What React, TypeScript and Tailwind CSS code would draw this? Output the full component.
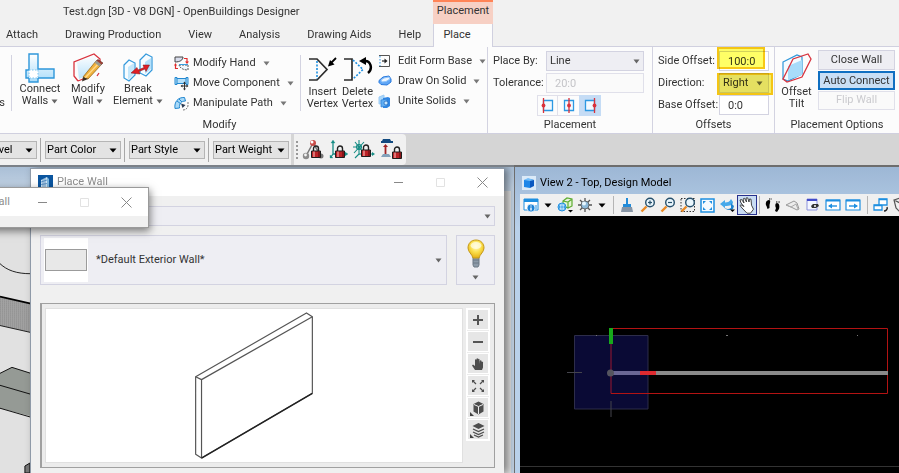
import type { ReactNode } from 'react'

function Caret({ className = 'text-[#666]' }: { className?: string }) {
  return (
    <svg width="7" height="5" viewBox="0 0 7 5" className={`shrink-0 ${className}`}>
      <path d="M0.5 0.5h6L3.5 4.5z" fill="currentColor" />
    </svg>
  )
}

function BlackCaret() {
  return (
    <svg width="8" height="5" viewBox="0 0 8 5" className="shrink-0">
      <path d="M0.5 0.5h7L4 4.5z" fill="#000" />
    </svg>
  )
}

/* ---------- ribbon icons ---------- */

function ConnectWallsIcon() {
  return (
    <svg width="30" height="30" viewBox="0 0 30 30">
      <defs>
        <linearGradient id="wallBlue" x1="0" y1="0" x2="0" y2="1">
          <stop offset="0" stopColor="#ffffff" />
          <stop offset="1" stopColor="#a9dcfa" />
        </linearGradient>
      </defs>
      <path d="M4 1h9v15h16v9H13v4H4v-4H1v-8h3z" fill="url(#wallBlue)" stroke="#2e97da" strokeWidth="1.4" />
      <path d="M4 17h9v8H4z" fill="#fff" stroke="#7cc3ee" strokeDasharray="1.5 1.5" />
    </svg>
  )
}

function ModifyWallIcon() {
  return (
    <svg width="30" height="30" viewBox="0 0 30 30">
      <path d="M4 9l19-7v16L6 26z" fill="url(#wallBlue)" opacity=".8" />
      <path d="M5 28L1 23V9l20-8 6 5v5M5 28l5-2M26 20l-2 3" fill="none" stroke="#d8343f" strokeWidth="1.3" />
      <path d="M10 24L23 8l5 4L15 26z" fill="#f0b23c" stroke="#98671b" strokeWidth=".8" />
      <path d="M12 25L26 10" stroke="#ffd98a" strokeWidth="1.4" />
      <path d="M23 8l2-1.5 5 3.5-2 2z" fill="#a43e32" stroke="#5b2c20" strokeWidth=".6" />
      <path d="M21.500 9.500l2-2 5 4-2 2z" fill="#9a9a90" />
      <path d="M10 24l5 2-6 2.500z" fill="#3b2d20" />
    </svg>
  )
}

function BreakElementIcon() {
  return (
    <svg width="30" height="30" viewBox="0 0 30 30">
      <g fill="#f7fcff" stroke="#3399dc" strokeWidth="1.2">
        <path d="M1 12l5-5 6 3v12l-6 6-5-3z" />
        <path d="M5 14v13l6-6V10z" stroke="none" fill="#c4e7fb" />
        <path d="M17 7l6-6 6 3v13l-6 6-6-3z" />
        <path d="M22 9v12l6-5V5z" stroke="none" fill="#b4e0fa" />
      </g>
      <path d="M8 20l6-5.500 1 2.500 6-2.500-1-2.500h6.500L23 18.500 22 16l-6 2.500 1 2.500z" fill="#df1f26" stroke="#7c1016" strokeWidth=".5" />
    </svg>
  )
}

function ModifyHandIcon() {
  return (
    <svg width="15" height="15" viewBox="0 0 15 15" fill="none">
      <path d="M1 1h8c0 3-3 5-8 5z" fill="#d8ddec" stroke="#444" />
      <path d="M10 2.500h3V6M4 12.500H1.500V9" stroke="#e02b2b" strokeWidth="1.200" />
      <path d="M11 5.500l2 2.500 2-2.500zM0 9.500L1.500 7 3 9.500z" fill="#e02b2b" />
      <path d="M5 9h9v5c-5 0-8-2-9-5z" fill="#f0f8ff" stroke="#555" strokeDasharray="2 1" />
      <path d="M5 8.500h9" stroke="#3a9fe2" />
    </svg>
  )
}

function MoveComponentIcon() {
  return (
    <svg width="15" height="15" viewBox="0 0 15 15" fill="none">
      <path d="M1 1.500h2v1h9v-1h2v7h-2v-1H3v1H1z" fill="#b5e0fa" stroke="#2388d0" />
      <path d="M3 2v6M12 2v6" stroke="#2388d0" />
      <path d="M10.500 6.500v7M7.500 10h6" stroke="#333" />
      <path d="M9 7.500l1.500-2 1.500 2zM9 12.500h3l-1.500 2zM8.500 8.500v3L6.500 10zM12.500 8.500v3l2-1.500z" fill="#333" />
    </svg>
  )
}

function ManipulatePathIcon() {
  return (
    <svg width="15" height="15" viewBox="0 0 15 15" fill="none">
      <path d="M1 12.500C0 6 4 1 10.500 1.500l1 3.500C7 5 5 8 5.500 12z" fill="#a9daf9" stroke="#2388d0" />
      <path d="M3 5l4 3M5 3l3 3" stroke="#2388d0" />
      <path d="M14 6v3c0 3-2 5-5 5" stroke="#777" strokeDasharray="2 1" />
      <path d="M7 7.500l4.500 1.500L8.500 12z" fill="#2b3d55" />
    </svg>
  )
}

function InsertVertexIcon() {
  return (
    <svg width="29" height="25" viewBox="0 0 29 25" fill="none">
      <path d="M1 2h8l10 10.500L9 23H1" stroke="#2c2c2c" strokeWidth="1.700" />
      <path d="M9 4v18" stroke="#1d8fe0" strokeWidth="1.600" strokeDasharray="2 1.500" />
      <path d="M28 1l-5 5" stroke="#000" strokeWidth="1.800" />
      <path d="M20 9.500l2-6.500 4.500 4.500z" fill="#000" />
    </svg>
  )
}

function DeleteVertexIcon() {
  return (
    <svg width="30" height="25" viewBox="0 0 30 25" fill="none">
      <path d="M1 2h8v21H1" stroke="#2c2c2c" strokeWidth="1.700" />
      <path d="M10 3l10 9.500L10 22" stroke="#1d8fe0" strokeWidth="1.600" strokeDasharray="2 1.500" />
      <path d="M21 4c7-1 9 8 4 12" stroke="#000" strokeWidth="2.500" />
      <path d="M16 4l7-4v8z" fill="#000" />
    </svg>
  )
}

function EditFormBaseIcon() {
  return (
    <svg width="16" height="14" viewBox="0 0 16 14" fill="none">
      <path d="M1 1.500h10.500v11H1" stroke="#555" />
      <path d="M2 2v10" stroke="#2893e0" strokeDasharray="1.500 1.500" />
      <path d="M4 7h4" stroke="#222" strokeWidth="1.200" />
      <path d="M6.500 4.500L9.500 7l-3 2.500z" fill="#222" />
    </svg>
  )
}

function DrawOnSolidIcon() {
  return (
    <svg width="16" height="14" viewBox="0 0 16 14">
      <path d="M1 6.500l4-3.500 6-1 2 3v3l-4 3-6-.5-2-2z" fill="#5fa6f6" stroke="#2878dc" />
      <path d="M3 6l3-2 5-1 1 2-4 2.500-4 .5z" fill="#eef6ff" stroke="#8ec3fa" />
    </svg>
  )
}

function UniteSolidsIcon() {
  return (
    <svg width="16" height="15" viewBox="0 0 16 15">
      <path d="M1 3l5-2v8l-5 1z" fill="#a9d7fb" stroke="#9ccbf5" />
      <path d="M5 4l5-1 2 1v8l-3 2H5z" fill="#2f86e4" />
      <path d="M3 6l6-1v7l-6 1z" fill="#5fadf3" stroke="#2d7cd4" strokeWidth=".7" />
      <circle cx="8" cy="9" r="2" fill="#c8e7ff" stroke="#1961b8" strokeWidth=".7" />
    </svg>
  )
}

function AlignIcon({ x }: { x: number }) {
  return (
    <svg width="14" height="15" viewBox="0 0 14 15" fill="none">
      <path d="M2.500 2.500h9v10h-9z" fill="#f2f9ff" stroke="#2c98e2" strokeWidth="1.300" />
      <path d={`M${x} 0v15`} stroke="#d9313b" strokeWidth="1.300" />
      <circle cx={x} cy="7.500" r="1.900" fill="#d9313b" />
    </svg>
  )
}

function OffsetTiltIcon() {
  return (
    <svg width="32" height="30" viewBox="0 0 32 30" fill="none">
      <path d="M2 9l14-7 5 2v17L7 28l-5-2z" fill="#f4fbff" stroke="#2e97da" strokeWidth="1.200" />
      <path d="M7 13l14-6v15L7 27z" fill="#a8dcfa" />
      <path d="M2 26L12 6l15-5 3 5-9 18L6 29z" stroke="#d8343f" strokeWidth="1.300" />
    </svg>
  )
}

/* ---------- lock toolbar icons ---------- */

function Padlock({ x, y }: { x: number; y: number }) {
  return (
    <g transform={`translate(${x} ${y})`}>
      <path d="M2.500 6V3.500a2.500 2.500 0 0 1 5 0V6" fill="none" stroke="#222" strokeWidth="1.400" />
      <path d="M.5 6h9v6.500h-9z" fill="#bb2226" stroke="#1d1d1d" />
      <path d="M3 6.500v5.500" stroke="#f0a3a0" strokeWidth="1.300" />
      <path d="M8 6.500v5.500" stroke="#6b1014" strokeWidth="1.300" />
    </g>
  )
}

function LockNodesIcon() {
  return (
    <svg width="23" height="22" viewBox="0 0 23 22">
      <path d="M11 4L4 17M11 4l8 13" stroke="#777" strokeWidth="1.500" />
      <circle cx="11" cy="4" r="3" fill="#c94c48" />
      <circle cx="10" cy="3" r="1.500" fill="#fff" />
      <circle cx="4" cy="17" r="3.200" fill="#8b8b8b" />
      <circle cx="3.500" cy="16" r="1.400" fill="#f5f5f5" />
      <circle cx="19" cy="17" r="2.500" fill="#777" />
      <Padlock x={9} y={6} />
    </svg>
  )
}

function LockAxesIcon() {
  return (
    <svg width="20" height="22" viewBox="0 0 20 22">
      <g stroke="#158c84" fill="#158c84" strokeWidth="1.300">
        <path d="M4 3v12h12M4 15l-2 3" fill="none" />
        <path d="M2 4l2-3 2 3zM16 13l3 2-3 2zM1 16v3h3z" strokeWidth=".3" />
      </g>
      <Padlock x={6} y={6} />
    </svg>
  )
}

function LockSnapIcon() {
  return (
    <svg width="23" height="22" viewBox="0 0 23 22">
      <g stroke="#158c84" strokeWidth="1.100" fill="none">
        <path d="M6 1v15M0 8h9M2 3l8 10M11 3L1 14M6 15h14M6 15l-4 4" />
        <circle cx="6" cy="8" r="2.500" />
        <path d="M19 13l3 2-3 2z" fill="#158c84" stroke="none" />
      </g>
      <Padlock x={8} y={5} />
    </svg>
  )
}

function LockHeightIcon() {
  return (
    <svg width="24" height="23" viewBox="0 0 24 23">
      <path d="M3 1h7l1 2h2v2H1V3h1z" fill="#124a80" />
      <path d="M5.500 8v8" stroke="#a02325" strokeWidth="1.800" />
      <path d="M3 9l2.500-3L8 9z" fill="#a02325" />
      <path d="M3 16h6l2 3H1z" fill="#83a1ba" />
      <Padlock x={12} y={8} />
    </svg>
  )
}

/* ---------- view toolbar icons ---------- */

function ViewAttributesIcon() {
  return (
    <svg width="16" height="16" viewBox="0 0 16 16">
      <path d="M1 2h14v11H1z" fill="#fff" stroke="#1e8fe0" />
      <path d="M1 2h14v3H1z" fill="#1e8fe0" />
      <circle cx="8" cy="11" r="4" fill="#1b82d6" stroke="#fff" strokeWidth=".7" />
      <path d="M8 10.500v3M8 8.500v1" stroke="#fff" strokeWidth="1.400" />
      <path d="M13 8v4" stroke="#1e8fe0" />
    </svg>
  )
}

function DisplayStyleIcon() {
  return (
    <svg width="17" height="16" viewBox="0 0 17 16" fill="none">
      <path d="M6 4l4-3 5 1v7l-4 2-5-2zM6 4l5 1 4-3M11 5v6" fill="#e4f5d4" stroke="#5dac32" strokeWidth="1.200" />
      <circle cx="5" cy="10" r="4" fill="#e6f5ff" stroke="#1e8fe0" />
      <path d="M1 10h8M5 6v8M3 7q-1 3 0 6M7 7q1 3 0 6" stroke="#1e8fe0" strokeWidth=".8" />
      <path d="M11 13h5l-2.500 2.500z" fill="#000" />
    </svg>
  )
}

function BrightnessIcon() {
  return (
    <svg width="16" height="16" viewBox="0 0 16 16">
      <path d="M8 1v14M1 8h14M3 3l10 10M13 3L3 13" stroke="#555" strokeWidth="1.300" />
      <circle cx="8" cy="8" r="4" fill="#8db9d9" stroke="#555" strokeWidth=".8" />
      <circle cx="7" cy="6.500" r="2" fill="#e6f6ff" />
    </svg>
  )
}

function UpdateViewIcon() {
  return (
    <svg width="14" height="16" viewBox="0 0 14 16">
      <path d="M6 1h2v6h3v3H3V7h3z" fill="#238bd8" />
      <path d="M2 10h10l1 5H1z" fill="#8795a5" />
    </svg>
  )
}

function ZoomIcon({ kind }: { kind: 'in' | 'out' | 'window' }) {
  return (
    <svg width="16" height="16" viewBox="0 0 16 16" fill="none">
      {kind === 'window' && <path d="M1 1.500h13.500v13H1z" stroke="#333" strokeDasharray="1.500 1.500" />}
      <path d="M6.500 9.500L1.500 14.500" stroke="#ea8a25" strokeWidth="2.400" />
      <circle cx="10" cy="5.500" r="4.300" fill="#eaf6fd" stroke="#27506c" strokeWidth="1.400" />
      {kind !== 'window' && <path d="M8 5.500h4" stroke="#27506c" strokeWidth="1.200" />}
      {kind === 'in' && <path d="M10 3.500v4" stroke="#27506c" strokeWidth="1.200" />}
    </svg>
  )
}

function FitViewIcon() {
  return (
    <svg width="15" height="15" viewBox="0 0 15 15" fill="none">
      <path d="M1 1h13v13H1z" fill="#f5fbff" stroke="#1e8fe0" strokeWidth="1.500" />
      <path d="M3 6V3h3zM9 3h3v3zM3 9v3h3zM12 9v3H9z" fill="#1e8fe0" />
    </svg>
  )
}

function RotateViewIcon() {
  return (
    <svg width="16" height="16" viewBox="0 0 16 16">
      <path d="M1 7l5-4v2.500c3 0 5-1 6-3.500l2 3c0 3-3 4-8 4V11z" fill="#45a8ea" />
      <path d="M4 9c2 3 5 4 8 2V6l3 3-1 3c-3 2-8 1-10-3z" fill="#1d83cf" />
      <path d="M11 12.500h5L13.500 15z" fill="#000" />
    </svg>
  )
}

function PanIcon() {
  return (
    <svg width="16" height="17" viewBox="0 0 16 17">
      <path
        d="M2 6L1 3l1.500-.5L5 6 4 2l1.500-.7L7.500 5 7 1l1.700-.2L10 5l.5-3 1.500.2.5 6 2 4-3 4H8L3 11 1 8.500l1-.7 3 1.700z"
        fill="#fff"
        stroke="#333"
        strokeWidth=".9"
      />
    </svg>
  )
}

function WalkIcon() {
  return (
    <svg width="16" height="16" viewBox="0 0 16 16">
      <path d="M4 3c2 0 1 3 .5 5v3l-2 1-1-3C0 7 1 3 4 3zM12 6c2 0 3 3 2 6l-2 3-2-1 1-3c-1-2-1-5 1-5z" />
      <path d="M4 2h3M11 5h4" stroke="#000" strokeDasharray="1 .6" />
    </svg>
  )
}

function FlyIcon() {
  return (
    <svg width="16" height="16" viewBox="0 0 16 16">
      <path d="M1 8l8-4 3 2 2 6-2 1-6-3z" fill="#ececec" stroke="#999" />
      <path d="M6 10l5-3 2 5M1 8l5 2" stroke="#aaa" fill="none" />
    </svg>
  )
}

function NavigateViewIcon() {
  return (
    <svg width="16" height="16" viewBox="0 0 16 16">
      <path d="M2 2h10v11H2z" fill="#f4f6ff" stroke="#8c93dd" />
      <path d="M2 2h10v2H2z" fill="#434bc8" />
      <path d="M6 9l2-2h5l1 2-3 2H7z" fill="#333" />
      <circle cx="10" cy="9" r="1" fill="#fff" />
    </svg>
  )
}

function ArrowWindowIcon({ forward = false }: { forward?: boolean }) {
  return (
    <svg width="16" height="14" viewBox="0 0 16 14">
      <path d="M1 2h14v10H1z" fill="#fff" stroke="#1e8fe0" strokeWidth="1.200" />
      <path d="M1 1.500h14v2H1z" fill="#1e8fe0" />
      <path d="M4 8h8" stroke="#1e8fe0" strokeWidth="1.400" />
      <path d={forward ? 'M9 5.500l4 2.500-4 2.500z' : 'M7 5.500L3 8l4 2.500z'} fill="#1e8fe0" />
    </svg>
  )
}

function CopyViewIcon() {
  return (
    <svg width="16" height="16" viewBox="0 0 16 16">
      <path d="M6 2h8v6H6zM1 8h8v5H1z" fill="#fff" stroke="#1e8fe0" strokeWidth="1.300" />
      <path d="M6 2.500h8M1 8.500h8" stroke="#1e8fe0" strokeWidth="1.600" />
      <path d="M14 10c1 2-1 4-3 4" fill="none" stroke="#222" strokeWidth="1.400" />
    </svg>
  )
}

function ClipVolumeIcon() {
  return (
    <svg width="16" height="16" viewBox="0 0 16 16" fill="none">
      <path d="M1 3l6-2 8 2-2 9-6 3-4-4zM1 3l6 3 8-3M7 6v9" stroke="#555" strokeWidth="1.200" />
    </svg>
  )
}

/* ---------- preview toolbar icons ---------- */

function PreviewIcon({ name }: { name: string }) {
  const corner = <path d="M0 16v-4l4 4z" fill="#444" />
  return (
    <svg width="16" height="16" viewBox="0 0 16 16" fill="none">
      {name === 'Zoom in' && <path d="M8 3v10M3 8h10" stroke="#555" strokeWidth="2" />}
      {name === 'Zoom out' && <path d="M3 8h10" stroke="#555" strokeWidth="2" />}
      {name === 'Pan' && (
        <path
          d="M5 14L2 9.500 3 8.500l2 1.500V4c0-1 1.500-1 1.500 0v4V3c0-1 1.500-1 1.500 0v5V3.500c0-1 1.500-1 1.500 0V8l.3-3c.2-1 1.700-1 1.700 0l.3 1c1-.5 1.500 0 1.200 1.500v4L12 14z"
          fill="#4d4d4d"
        />
      )}
      {name === 'Fit' && (
        <g fill="#4d4d4d" stroke="#4d4d4d">
          <path d="M3 3l3 3M13 3l-3 3M3 13l3-3M13 13l-3-3" strokeWidth="1.200" />
          <path d="M2 5V2h3zM14 5V2h-3zM2 11v3h3zM14 11v3h-3z" stroke="none" />
        </g>
      )}
      {name === 'Rotate' && (
        <>
          <path d="M8.500 1.500l5 2.500v7.500l-5 3-5-3V4z" fill="#4d4d4d" />
          <path d="M4 4.500l4.500 2 4.500-2M8.500 6.500V14" stroke="#eee" />
          {corner}
        </>
      )}
      {name === 'Layers' && (
        <>
          <path d="M8.500 1l6 3-6 3-6-3z" fill="#4d4d4d" />
          <path d="M3 7l5.500 2.500L14 7M3 10l5.500 2.500L14 10M4 13l4.500 2 4.500-2" stroke="#4d4d4d" strokeWidth="1.300" />
          {corner}
        </>
      )}
    </svg>
  )
}

function BulbIcon() {
  return (
    <svg width="20" height="30" viewBox="0 0 20 30">
      <defs>
        <radialGradient id="bulbGlow" cx=".5" cy=".35" r=".65">
          <stop offset="0" stopColor="#fffbd5" />
          <stop offset=".5" stopColor="#fbe04e" />
          <stop offset="1" stopColor="#e5b013" />
        </radialGradient>
      </defs>
      <path d="M7 18h6v8l-1 2H8l-1-2z" fill="#8d9ba9" stroke="#6c7985" />
      <path d="M7 21h6M7 24h6" stroke="#6c7985" />
      <path d="M10 1c5 0 8 3.500 8 8 0 4-4 6-5 10H7C6 15 2 13 2 9c0-4.500 3-8 8-8z" fill="url(#bulbGlow)" stroke="#c59a1c" />
      <ellipse cx="10" cy="6.500" rx="5.500" ry="3.500" fill="#fffce4" opacity=".75" />
    </svg>
  )
}

function WindowControls() {
  return (
    <div className="ml-auto mr-4 flex items-center gap-[31px]">
      <button aria-label="Minimize">
        <svg width="11" height="11" viewBox="0 0 11 11"><path d="M1 5.500h9" stroke="#888" /></svg>
      </button>
      <button aria-label="Maximize" disabled>
        <svg width="11" height="11" viewBox="0 0 11 11"><path d="M1.500 1.500h8v8h-8z" fill="none" stroke="#e2e2e2" /></svg>
      </button>
      <button aria-label="Close">
        <svg width="11" height="11" viewBox="0 0 11 11"><path d="M.5.500l10 10M10.500.500l-10 10" stroke="#888" /></svg>
      </button>
    </div>
  )
}

/* ---------- ribbon ---------- */

function RibbonGroup({ label, className = '', children }: { label: string; className?: string; children: ReactNode }) {
  return (
    <section className={`flex shrink-0 flex-col border-r border-[#d3d3e1] ${className}`}>
      <div className="flex h-[71px]">{children}</div>
      <h2 className="text-center leading-4">{label}</h2>
    </section>
  )
}

function BigButton({ icon, lines, caret = false, className }: { icon: ReactNode; lines: [string, string]; caret?: boolean; className: string }) {
  return (
    <button className={`flex flex-col items-center leading-3 ${className}`}>
      {icon}
      <span>{lines[0]}</span>
      <span className="flex items-center gap-[3px]">
        {lines[1]}
        {caret && <Caret />}
      </span>
    </button>
  )
}

function MenuButton({ icon, text }: { icon: ReactNode; text: string }) {
  return (
    <button className="flex h-5 items-center whitespace-nowrap">
      {icon}
      <span className="ml-1 mr-[7px]">{text}</span>
      <Caret className="text-[#777]" />
    </button>
  )
}

function Ribbon() {
  return (
    <div className="flex h-[88px] shrink-0 overflow-hidden border-y border-[#d0d0df] bg-[#fcfcfc]">
      <RibbonGroup label="Modify" className="-ml-12 w-[536px]">
        <div className="flex w-[53px] items-end justify-end pb-[6px]">es</div>
        <div className="ml-[6px] mt-2 h-[56px] border-l border-[#d3d3e1]" />
        <BigButton className="ml-1 w-12 pt-[6px]" icon={<ConnectWallsIcon />} lines={['Connect', 'Walls']} caret />
        <BigButton className="w-12 pt-[6px]" icon={<ModifyWallIcon />} lines={['Modify', 'Wall']} caret />
        <BigButton className="w-[52px] pt-[6px]" icon={<BreakElementIcon />} lines={['Break', 'Element']} caret />
        <div className="ml-[10px] w-[126px] pt-[6px]">
          <MenuButton icon={<ModifyHandIcon />} text="Modify Hand" />
          <MenuButton icon={<MoveComponentIcon />} text="Move Component" />
          <MenuButton icon={<ManipulatePathIcon />} text="Manipulate Path" />
        </div>
        <div className="mt-2 h-[56px] border-l border-[#d3d3e1]" />
        <BigButton className="ml-1 w-[35px] pt-[10px]" icon={<div className="h-[29px]"><InsertVertexIcon /></div>} lines={['Insert', 'Vertex']} />
        <BigButton className="w-[35px] pt-[10px]" icon={<div className="h-[29px]"><DeleteVertexIcon /></div>} lines={['Delete', 'Vertex']} />
        <div className="ml-[3px] pt-[4px]">
          <MenuButton icon={<EditFormBaseIcon />} text="Edit Form Base" />
          <MenuButton icon={<DrawOnSolidIcon />} text="Draw On Solid" />
          <MenuButton icon={<UniteSolidsIcon />} text="Unite Solids" />
        </div>
      </RibbonGroup>

      <RibbonGroup label="Placement" className="w-[165px]">
        <div className="ml-[5px] grid grid-cols-[53px_98px] content-start gap-y-[2px] pt-1">
          <label htmlFor="placeBy" className="leading-5">Place By:</label>
          <div className="relative">
            <select id="placeBy" className="h-5 w-full appearance-none border border-[#d3d3e1] bg-[#eeeef3] px-[3px]">
              <option>Line</option>
            </select>
            <Caret className="pointer-events-none absolute right-1 top-2 text-[#666]" />
          </div>
          <label htmlFor="tolerance" className="leading-5">Tolerance:</label>
          <input id="tolerance" disabled defaultValue="20:0" className="h-5 w-full border border-[#e0e0ea] bg-[#fafafa] px-2 text-[#c4c4c8]" />
          <div className="col-span-2 ml-11 flex">
            <button aria-label="Left" className="flex h-[21px] w-[21px] items-center justify-center border border-[#e0e0ea]"><AlignIcon x={2.5} /></button>
            <button aria-label="Center" className="flex h-[21px] w-[21px] items-center justify-center border-y border-[#e0e0ea]"><AlignIcon x={7} /></button>
            <button aria-label="Right" className="flex h-[21px] w-[22px] items-center justify-center bg-[#c5dcf5]"><AlignIcon x={11.5} /></button>
          </div>
        </div>
      </RibbonGroup>

      <RibbonGroup label="Offsets" className="w-[122px]">
        <div className="ml-[5px] grid grid-cols-[59px_54px] content-start gap-y-[2px] pt-1">
          <label htmlFor="sideOffset" className="whitespace-nowrap leading-5">Side Offset:</label>
          <div className="relative pl-[2px]">
            <input id="sideOffset" defaultValue="100:0" className="h-5 w-[50px] border border-[#d3d3e1] bg-white px-2" />
            <div className="pointer-events-none absolute -top-1 left-0 h-[22px] w-12 border-2 border-[#f7c815] bg-[#ffff00]/60 mix-blend-multiply" />
          </div>
          <label htmlFor="direction" className="leading-5">Direction:</label>
          <div className="relative pl-[2px]">
            <select id="direction" className="h-5 w-[50px] appearance-none border border-[#d3d3e1] bg-[#eeeef3] px-[3px]">
              <option>Right</option>
            </select>
            <Caret className="pointer-events-none absolute right-2 top-2 text-[#666]" />
            <div className="pointer-events-none absolute left-0 top-0 h-[22px] w-14 border-2 border-[#f7c815] bg-[#f0e600]/60 mix-blend-multiply" />
          </div>
          <label htmlFor="baseOffset" className="whitespace-nowrap leading-5">Base Offset:</label>
          <div className="pl-[2px]">
            <input id="baseOffset" defaultValue="0:0" className="h-5 w-[50px] border border-[#d3d3e1] bg-white px-2" />
          </div>
        </div>
      </RibbonGroup>

      <RibbonGroup label="Placement Options" className="grow border-r-0">
        <BigButton className="w-[43px] pt-[6px]" icon={<div className="h-[33px]"><OffsetTiltIcon /></div>} lines={['Offset', 'Tilt']} />
        <div className="flex w-[77px] flex-col gap-px pt-[3px]">
          <button className="h-5 border border-[#d3d3e1] bg-[#eeeef3]">Close Wall</button>
          <button className="h-[19px] whitespace-nowrap border-2 border-[#0f6fc1] bg-[#c9dff5] leading-[14px]">Auto Connect</button>
          <button disabled className="h-[19px] border border-[#e0e0ea] bg-[#fafafa] text-[#cbcbcf]">Flip Wall</button>
        </div>
      </RibbonGroup>
    </div>
  )
}

function Header() {
  const tabs = ['Attach', 'Drawing Production', 'View', 'Analysis', 'Drawing Aids', 'Help']
  return (
    <header className="flex h-[46px] shrink-0 bg-[#f1f1f1]">
      <div className="w-[433px] shrink-0 overflow-hidden">
        <h1 className="h-6 pl-[63px] leading-6">Test.dgn [3D - V8 DGN] - OpenBuildings Designer</h1>
        <nav className="flex gap-[27px] whitespace-nowrap pl-[6px] leading-[22px]">
          {tabs.map((name) => (
            <a key={name} href="#">{name}</a>
          ))}
        </nav>
      </div>
      <div className="relative z-10 -mb-px flex w-[60px] shrink-0 flex-col text-center">
        <span className="h-6 border-t-2 border-[#ff8457] bg-[#f7d0c4] leading-[18px]">Placement</span>
        <a href="#" className="flex-1 border-x border-[#d0d0df] bg-[#fcfcfc] pr-3 leading-[22px]">Place</a>
      </div>
    </header>
  )
}

function PartBar() {
  return (
    <div className="flex h-[31px] shrink-0 overflow-hidden bg-[#d5d5d5]">
      <div className="flex shrink-0 items-center gap-[3px] bg-[#f1f1f1] pr-[2px]">
        {[['Level', '-ml-10'], ['Part Color', ''], ['Part Style', ''], ['Part Weight', '']].map(([name, shift], i) => (
          <div key={name} className={`flex items-center gap-1 ${shift}`}>
            {i > 0 && <div className="h-6 border-l border-[#a8a8a8]" />}
            <div className="relative">
              <select
                aria-label={name}
                className={`h-[18px] appearance-none border border-[#b5b5b5] bg-[#e3e3e3] text-black ${i === 0 ? 'w-[77px] pl-[26px]' : 'w-[76px] pl-px'}`}
              >
                <option>{name}</option>
              </select>
              <div className="pointer-events-none absolute right-[4px] top-[7px]"><BlackCaret /></div>
            </div>
          </div>
        ))}
      </div>
      <div className="ml-[3px] flex shrink-0 items-center rounded-r bg-[#f1f1f1] px-[2px]">
        <div className="mr-1 h-[18px] border-l-2 border-dotted border-[#999]" />
        <button aria-label="Association lock" className="mr-1"><LockNodesIcon /></button>
        <button aria-label="Axis lock" className="mr-1"><LockAxesIcon /></button>
        <button aria-label="Snap lock" className="mr-1"><LockSnapIcon /></button>
        <button aria-label="Depth lock"><LockHeightIcon /></button>
      </div>
    </div>
  )
}

/* ---------- workspace ---------- */

function ModelBackground() {
  return (
    <svg viewBox="0 190 514 283" preserveAspectRatio="xMinYMin slice" className="h-full w-full bg-[#e1e1e1]">
      <defs>
        <pattern id="hatch" width="2" height="2" patternUnits="userSpaceOnUse">
          <path d="M0 0h2v2H0z" fill="#a2a2a2" />
          <path d="M0 0h1v1H0z" fill="#8a8a8a" />
        </pattern>
      </defs>
      <path d="M-1 262c8 8 18 11 32 11" fill="none" stroke="#222" />
      <path d="M0 296l31 7v29l-31-7z" fill="url(#hatch)" />
      <path d="M0 296l31 7" stroke="#000" strokeWidth="1.600" />
      <path d="M0 325l31 7" stroke="#222" />
      <path d="M0 373l12-6 19 6v43l-31-8z" fill="#959a95" />
      <path d="M0 373l12-6 19 6M0 385l31 9M0 408l31 9" fill="none" stroke="#111" />
      <path d="M25 466l5-3v10h-5z" fill="#777" stroke="#111" />
    </svg>
  )
}

function PlaceWallDialog() {
  return (
    <div className="absolute bottom-0 left-[30px] right-[10px] top-px flex min-h-[304px] flex-col border-l border-t border-[#8f9aa8] bg-[#f0f0f0] shadow-[4px_0_8px_rgba(0,0,0,0.45)]">
      <div className="flex h-[27px] shrink-0 items-center bg-white pl-[7px] text-[#8d8d8d]">
        <svg width="15" height="15" viewBox="0 0 15 15" className="shrink-0">
          <path d="M0 0h15v15H0z" fill="#0b559f" />
          <path d="M3 5l6-3v11l-6-1z" fill="#cfe5f5" />
          <path d="M9 2l2 2v8l-2 1z" fill="#7db6df" />
          <path d="M3 7l6-2M3 9.500l6-1M5 4v8M7 3v9" stroke="#0b559f" strokeWidth=".5" />
        </svg>
        <h2 className="ml-1">Place Wall</h2>
        <WindowControls />
      </div>
      <div className="flex flex-1 flex-col px-[9px] pt-[10px]">
        <div className="relative">
          <select aria-label="Wall catalog" className="h-5 w-full appearance-none border border-[#d3d3e1] bg-[#eeeef3]">
            <option />
          </select>
          <Caret className="pointer-events-none absolute right-1 top-2 text-[#666]" />
        </div>
        <div className="mt-[9px] flex h-[50px] gap-[9px]">
          <button className="flex flex-1 items-center border border-[#d3d3e1] bg-[#eeeef3] pl-[3px] pr-1">
            <span className="flex h-11 w-11 items-center bg-white px-px">
              <span className="h-[22px] w-full border border-[#9b9b9b] bg-[#e8e8e8]" />
            </span>
            <span className="ml-2">*Default Exterior Wall*</span>
            <Caret className="ml-auto text-[#666]" />
          </button>
          <button aria-label="Tips" className="flex w-[39px] flex-col items-center justify-between border border-[#d3d3e1] bg-[#eeeef3] pb-1 pt-[3px]">
            <BulbIcon />
            <Caret />
          </button>
        </div>
        <div className="mt-[18px] flex h-[165px] gap-[3px] border border-l-2 border-[#a0a0a0] bg-[#ececec] py-1 pl-[3px] pr-1">
          <svg viewBox="45 308 417 156" className="min-w-0 flex-1 border border-[#e0e0e0] bg-white">
            <g fill="#fff" stroke="#555" strokeWidth="1.200" strokeLinejoin="round">
              <path d="M194 377l113-65 6 4v78l-113 66-6-4z" />
              <path d="M194 377l6 3 113-64M200 380v80" fill="none" />
              <path d="M200 460l113-66" stroke="#222" strokeWidth="1.500" />
            </g>
          </svg>
          <div className="flex flex-col gap-px self-start border border-white">
            {['Zoom in', 'Zoom out', 'Pan', 'Fit', 'Rotate', 'Layers'].map((name) => (
              <button key={name} aria-label={name} className="flex h-[21px] w-[22px] items-center justify-center border border-white bg-[#e6e6e6]">
                <PreviewIcon name={name} />
              </button>
            ))}
          </div>
        </div>
      </div>
    </div>
  )
}

function SmallDialog() {
  return (
    <div className="absolute -left-14 top-5 h-[41px] w-[205px] border border-[#9a9a9a] bg-[#f0f0f0] shadow-[1px_3px_8px_rgba(0,0,0,0.5)]">
      <div className="flex h-7 items-center bg-white pl-[14px] text-[#8d8d8d]">
        <h2>Place Wall</h2>
        <WindowControls />
      </div>
    </div>
  )
}

function ToolSeparator() {
  return <div className="mx-[2px] h-[18px] border-l border-[#b5b5b5]" />
}

function ViewToolbar() {
  return (
    <div className="flex h-[22px] items-center overflow-hidden bg-[#f0f0f0] pl-[3px] *:shrink-0">
      <button aria-label="View attributes"><ViewAttributesIcon /></button>
      <button aria-label="More attributes" className="ml-[5px]"><BlackCaret /></button>
      <button aria-label="Display style" className="ml-[5px]"><DisplayStyleIcon /></button>
      <button aria-label="Brightness" className="ml-[3px]"><BrightnessIcon /></button>
      <button aria-label="More brightness" className="mx-[5px]"><BlackCaret /></button>
      <ToolSeparator />
      <button aria-label="Update view" className="ml-[4px]"><UpdateViewIcon /></button>
      <button aria-label="Zoom in view" className="ml-[6px]"><ZoomIcon kind="in" /></button>
      <button aria-label="Zoom out view" className="ml-[4px]"><ZoomIcon kind="out" /></button>
      <button aria-label="Window area" className="ml-[4px]"><ZoomIcon kind="window" /></button>
      <button aria-label="Fit view" className="ml-[4px]"><FitViewIcon /></button>
      <button aria-label="Rotate view" className="ml-[4px]"><RotateViewIcon /></button>
      <button aria-label="Pan view" className="ml-[2px] flex h-5 w-5 items-center justify-center border border-[#27318e] bg-[#c9dcf3]"><PanIcon /></button>
      <ToolSeparator />
      <button aria-label="Walk" className="ml-[3px]"><WalkIcon /></button>
      <button aria-label="Fly" className="ml-[4px]"><FlyIcon /></button>
      <button aria-label="Navigate view" className="ml-[4px]"><NavigateViewIcon /></button>
      <button aria-label="View previous" className="ml-[4px]"><ArrowWindowIcon /></button>
      <button aria-label="View next" className="mx-[4px]"><ArrowWindowIcon forward /></button>
      <ToolSeparator />
      <button aria-label="Copy view" className="ml-[3px]"><CopyViewIcon /></button>
      <button aria-label="Clip volume" className="ml-[4px]"><ClipVolumeIcon /></button>
    </div>
  )
}

function ViewTwo() {
  return (
    <section className="flex min-w-0 flex-col border-l border-t-2 border-[#6d6d6d] bg-linear-to-b from-[#9db7d5] to-[#b9d1ea] to-20% pl-[5px]">
      <div className="flex h-[27px] shrink-0 items-center pl-[2px] pt-[5px] text-black">
        <svg width="14" height="14" viewBox="0 0 14 14" className="shrink-0">
          <path d="M0 0h14v14H0z" fill="#dbeaf8" />
          <path d="M2 4l6-1v9l-6-1z" fill="#1d86e8" />
          <path d="M8 3l4 1v6l-4 2z" fill="#0b58c0" />
          <path d="M2 4l4-2 6 2-4 1z" fill="#72bdf9" />
        </svg>
        <h2 className="ml-1 whitespace-nowrap">View 2 - Top, Design Model</h2>
      </div>
      <ViewToolbar />
      <svg viewBox="520 216 379 257" preserveAspectRatio="xMinYMin slice" className="min-h-0 w-full flex-1 bg-black">
        <path d="M520 466.500h379" stroke="#333" />
        <path d="M574.500 335.500h73.500v73.500h-73.500z" fill="#0a0a35" stroke="#2d2d4a" />
        <path d="M611 328.500h276.500v65H611z" fill="none" stroke="#b31313" />
        <path d="M611 336v57" stroke="#4f1238" strokeWidth="1.500" />
        <path d="M611 373h277" stroke="#8a8a8a" strokeWidth="4" />
        <path d="M611 373h29" stroke="#6a6795" strokeWidth="4" />
        <path d="M640 373h16" stroke="#dd2a30" strokeWidth="4" />
        <path d="M611 328v16" stroke="#17a91b" strokeWidth="4" />
        <circle cx="610.500" cy="373" r="3.500" fill="#55555f" />
        <path d="M567 372.500h15M611 401v16" stroke="#44444c" />
        <path d="M596 335.500h1M726 335.500h2M857 335.500h1" stroke="#777" />
      </svg>
    </section>
  )
}

export default function App() {
  return (
    <div className="flex h-screen flex-col overflow-hidden bg-[#d5d5d5] font-['Roboto','Noto_Sans',sans-serif] text-[11px] text-[#333]">
      <Header />
      <Ribbon />
      <PartBar />
      <main className="grid min-h-0 flex-1 grid-cols-[514fr_385fr] overflow-hidden">
        <section className="relative flex min-w-0 flex-col overflow-hidden border-t-2 border-[#7b8188] bg-[#c0d1e2]">
          <div className="h-6 shrink-0 bg-linear-to-b from-[#aabfd6] to-[#c3d3e4]" />
          <div className="min-h-0 flex-1 pr-[3px]"><ModelBackground /></div>
          <PlaceWallDialog />
          <SmallDialog />
        </section>
        <ViewTwo />
      </main>
    </div>
  )
}
